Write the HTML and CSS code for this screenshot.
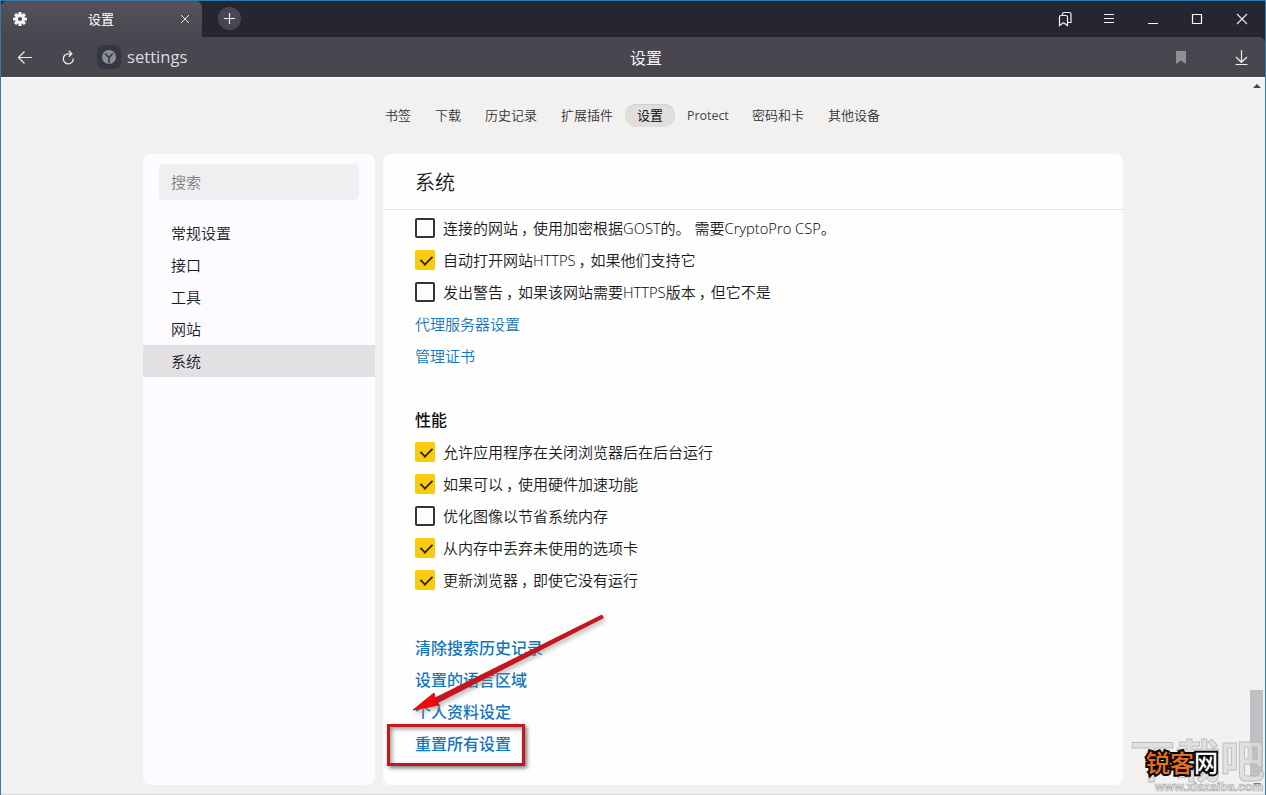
FILE: index.html
```html
<!DOCTYPE html>
<html lang="zh-CN">
<head>
<meta charset="utf-8">
<title>设置</title>
<link rel="stylesheet" href="styles.css">
</head>
<body>
<div class="window">
  <header class="tabstrip">
    <div class="tab">
      <svg class="gear" width="16" height="16" viewBox="-8 -8 16 16"><g fill="#f3f2f4"><rect x="-1.6" y="-7" width="3.2" height="14" rx=".6"/><rect x="-1.6" y="-7" width="3.2" height="14" rx=".6" transform="rotate(45)"/><rect x="-1.6" y="-7" width="3.2" height="14" rx=".6" transform="rotate(90)"/><rect x="-1.6" y="-7" width="3.2" height="14" rx=".6" transform="rotate(135)"/><circle r="5"/></g><circle r="2.1" fill="#4e4b55"/></svg>
      <span class="tab-title">设置</span>
      <svg width="10" height="10" viewBox="0 0 10 10" stroke="#e4e3e7" fill="none"><path d="M1 1l8 8M9 1l-8 8"/></svg>
    </div>
    <div class="newtab"><svg width="23" height="23" viewBox="0 0 23 23"><circle cx="11.5" cy="11.5" r="11.5" fill="#484650"/><path d="M11.5 6v11M6 11.5h11" stroke="#eeedf0" stroke-width="1.2"/></svg></div>
    <div class="controls">
      <svg width="44" height="36" viewBox="0 0 44 36" fill="none" stroke="#f0eff2" stroke-width="1.2"><path d="M16.500 24.500V16q0-1.500 1.500-1.500h5q1.500 0 1.500 1.500v8.500l-4-2.800zM19.500 14v-1q0-1.500 1.500-1.500h5.500q1.500 0 1.500 1.500v8.500h-3"/></svg>
      <svg width="44" height="36" viewBox="0 0 44 36" fill="none" stroke="#f0eff2"><path d="M17 13.500h10M17 17.500h10M17 21.500h10"/></svg>
      <svg width="44" height="36" viewBox="0 0 44 36" fill="none" stroke="#fff"><path d="M17 22.500h10"/></svg>
      <svg width="44" height="36" viewBox="0 0 44 36" fill="none" stroke="#fff" stroke-width="1.200"><path d="M17.500 13.500h9v9h-9z"/></svg>
      <svg width="44" height="36" viewBox="0 0 44 36" fill="none" stroke="#e6e5e9" stroke-width="1.200"><path d="M18 13l10 10M28 13l-10 10"/></svg>
    </div>
  </header>
  <div class="toolbar-wrap">
  <div class="toolbar">
    <svg width="16" height="14" viewBox="0 0 16 14" fill="none" stroke="#eeedf0" stroke-width="1.200"><path d="M15 7.500H1.500M7.500 1.500l-6 6 6 6"/></svg>
    <svg class="reload" width="13" height="16" viewBox="0 0 13 16" fill="none" stroke="#eeedf0" stroke-width="1.300"><path d="M11.300 9.500a5 5 0 1 1-5-4.700h3.200M6.800 1.800l3 3-3 3"/></svg>
    <span class="site"><svg width="14" height="14" viewBox="0 0 14 14"><circle cx="7" cy="7" r="7" fill="#8b8f9a"/><path d="M3.200 3.500L7 7.600l3.800-4.100M7 7.300v6" fill="none" stroke="#373743" stroke-width="1.600"/></svg></span>
    <span class="url">settings</span>
    <span class="page-title">设置</span>
    <svg class="bookmark" width="10" height="13" viewBox="0 0 10 13"><path d="M0 0h10v13l-5-3.500L0 13z" fill="#8f8e94"/></svg>
    <svg width="14" height="16" viewBox="0 0 14 16" fill="none" stroke="#eeedf0" stroke-width="1.200"><path d="M6.500 1v12M1 8l5.500 5.300L12 8M.5 15.500h12"/></svg>
  </div>
  </div>
  <main class="page">
    <nav class="topnav">
      <a>书签</a><a>下载</a><a>历史记录</a><a>扩展插件</a><a class="active">设置</a><a class="protect">Protect</a><a>密码和卡</a><a>其他设备</a>
    </nav>
    <div class="columns">
      <aside class="side">
        <div class="search">搜索</div>
        <div class="cat">常规设置</div>
        <div class="cat">接口</div>
        <div class="cat">工具</div>
        <div class="cat">网站</div>
        <div class="cat current">系统</div>
      </aside>
      <section class="panel">
        <h1>系统</h1>
        <div class="list">
          <div class="row"><i class="box"></i><span>连接的网站<b class="comma">，</b>使用加密根据<b class="lat">GOST</b>的。 需要<b class="lat">CryptoPro CSP</b>。</span></div>
          <div class="row"><i class="box on"></i><span>自动打开网站<b class="lat">HTTPS</b><b class="comma">，</b>如果他们支持它</span></div>
          <div class="row"><i class="box"></i><span>发出警告<b class="comma">，</b>如果该网站需要<b class="lat">HTTPS</b>版本<b class="comma">，</b>但它不是</span></div>
          <a class="row link">代理服务器设置</a>
          <a class="row link">管理证书</a>
          <h2>性能</h2>
          <div class="row"><i class="box on"></i><span>允许应用程序在关闭浏览器后在后台运行</span></div>
          <div class="row"><i class="box on"></i><span>如果可以<b class="comma">，</b>使用硬件加速功能</span></div>
          <div class="row"><i class="box"></i><span>优化图像以节省系统内存</span></div>
          <div class="row"><i class="box on"></i><span>从内存中丢弃未使用的选项卡</span></div>
          <div class="row"><i class="box on"></i><span>更新浏览器<b class="comma">，</b>即使它没有运行</span></div>
          <div class="actions">
            <a class="row">清除搜索历史记录</a>
            <a class="row">设置的语言区域</a>
            <a class="row">个人资料设定</a>
            <a class="row">重置所有设置</a>
          </div>
        </div>
      </section>
    </div>
  </main>
  <div class="scroll-up"></div>
  <div class="thumb"></div>
  <div class="scroll-down"></div>
  <div class="mark-big">下载吧</div>
  <div class="mark-url">www.xiazaiba.com</div>
  <div class="mark"><span>锐客</span>网</div>
  <div class="frame"></div>
  <svg class="arrow" width="210" height="115" viewBox="0 0 210 115"><path d="M34 94L202 10.500l2 3.500L36 100z" fill="#c4161c"/><path d="M13 106l21-17 1 5.500 4 6.500z" fill="#f40808" stroke="#d80c0c"/></svg>
</div>
</body>
</html>
```
FILE: styles.css
```css
* { box-sizing: border-box; }
body { margin: 0; overflow: hidden; font-family: "Open Sans", "Noto Sans CJK SC", sans-serif; }
svg { display: block; flex: none; }
.window { position: relative; width: 1266px; height: 795px; background: #f2f1f0; border: 1px solid #3678a8; border-bottom: 0; overflow: hidden; display: flex; flex-direction: column; }
.tabstrip { height: 36px; flex: none; display: flex; align-items: center; background: linear-gradient(#152b47 0, #262631 4px); }
.tab { width: 201px; height: 36px; display: flex; align-items: center; padding: 0 12px 0 11px; background: linear-gradient(#55525c, #494650); border-radius: 6px 6px 0 0; }
.tab-title { flex: 1; text-align: center; font: 13px "Noto Sans CJK SC", sans-serif; color: #fff; padding: 0 6px 2px 0; }
.newtab { margin: 0 0 1px 16px; }
.controls { margin: 0 2px 0 auto; display: flex; }
.toolbar-wrap { flex: none; background: linear-gradient(90deg, #494650 50%, #262631 50%); }
.toolbar { height: 40px; display: flex; align-items: center; padding: 0 16px; background: #494650; color: #dcdbe1; border-radius: 0 6px 0 0; }
.reload { margin-left: 29px; }
.site { width: 24px; height: 24px; margin-left: 22px; border-radius: 6px; background: #373743; display: flex; align-items: center; justify-content: center; }
.url { font-size: 16.6px; margin-left: 6px; width: 99px; padding-bottom: 2px; }
.page-title { flex: 1; padding-left: 404px; font: 16px "Noto Sans CJK SC", sans-serif; color: #f4f3f6; }
.bookmark { margin-right: 49px; }
.page { flex: 1; border-top: 1px solid #fff; border-bottom: 1px solid #dad9db; display: flex; flex-direction: column; }
.topnav { height: 76px; display: flex; align-items: center; padding: 0 0 1px 372px; flex: none; font-weight: 350; }
.topnav a { height: 23px; padding: 0 12px; line-height: 23px; font-size: 13px; color: #333; }
.topnav .active { color: #000; background: #e0dfde; border-radius: 12px; box-shadow: inset 0 1px 1px #cfcecd; }
.topnav .protect { font-size: 12.4px; width: 65px; line-height: 24px; font-weight: 400; color: #444; }
.columns { display: flex; gap: 8px; padding-left: 142px; }
.side { width: 232px; height: 631px; background: #fdfbff; border-radius: 8px; padding-top: 10px; font-size: 15px; font-weight: 350; color: #1a1a1a; }
.search { width: 200px; height: 36px; margin: 0 16px 17px; padding-left: 12px; line-height: 36px; border-radius: 5px; background: #efeef0; color: #808080; }
.cat { height: 32px; line-height: 32px; padding-left: 28px; }
.current { background: #e2e0e3; }
.panel { width: 740px; height: 631px; background: #fefeff; border-radius: 8px; }
h1 { margin: 0; height: 56px; padding: 2px 32px 0 32px; line-height: 54px; font-size: 20px; font-weight: 350; color: #1a1a1a; border-bottom: 1px solid #e4e3e5; }
.list { padding: 2px 32px 0; }
.row { height: 32px; display: flex; align-items: center; gap: 8px; font-size: 15px; line-height: 32px; font-weight: 350; color: #1a1a1a; white-space: pre; }
.box { width: 20px; height: 20px; border: 2px solid #35323a; border-radius: 2px; flex: none; }
.box.on { border: 0; background: #fccb0b; display: grid; place-items: center; }
.box.on::after { content: ""; width: 11px; height: 6px; border: solid #222; border-width: 0 0 2.400px 2.400px; transform: translate(1px, -1px) rotate(-45deg) scale(.9); }
.comma { font-weight: inherit; margin: 0 -3px 0 3px; }
.lat { font-weight: 300; font-size: 14.700px; color: #000; }
.link { color: #1776b5; }
h2 { margin: 32px 0 0; height: 32px; line-height: 32px; font-size: 16px; font-weight: 500; color: #111; }
.actions { margin-top: 36px; }
.actions .row { font-size: 16px; font-weight: 500; color: #1776b5; }
.scroll-up, .scroll-down { position: absolute; left: 1252px; width: 0; height: 0; border: solid transparent; border-width: 0 4px; }
.scroll-up { top: 83px; border-bottom: 4px solid #444; }
.scroll-down { top: 782px; border-top: 4px solid #777; }
.thumb { position: absolute; left: 1249px; top: 689px; width: 13px; height: 87px; background: #c1bfc4; }
.mark-big { position: absolute; left: 1129px; top: 733px; font: 700 45px/50px "Noto Sans CJK SC", sans-serif; color: #dddcdc; -webkit-text-stroke: 1px #b4b3b4; opacity: .8; }
.mark-url { position: absolute; left: 1154px; top: 779px; font: 700 12.3px/15px "Liberation Sans", sans-serif; color: #f5f4f4; -webkit-text-stroke: .7px #aaa; }
.mark { position: absolute; left: 1145px; top: 743px; font: 500 24px/36px "Noto Sans CJK SC", sans-serif; color: #fff; -webkit-text-stroke: 4px #080808; paint-order: stroke fill; }
.mark span { color: #e8701a; }
.frame { position: absolute; left: 386px; top: 723px; width: 138px; height: 42px; border: 3px solid #c1191f; box-shadow: 2px 2px 4px #777, inset 2px 2px 4px #999; }
.arrow { position: absolute; left: 399px; top: 603px; filter: drop-shadow(2px 3px 2px #8888); }
```
